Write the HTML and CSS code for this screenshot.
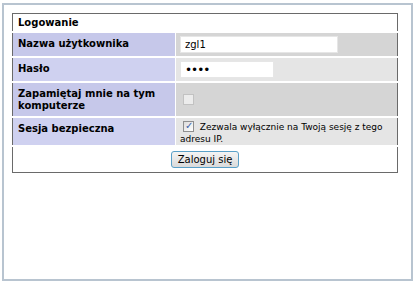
FILE: index.html
```html
<!DOCTYPE html>
<html lang="pl">
<head>
  <meta charset="UTF-8">
  <title>Logowanie</title>
  <link rel="stylesheet" href="styles.css">
</head>
<body>
  <div class="frame">
    <table class="login">
      <tr>
        <th colspan="2" class="title">Logowanie</th>
      </tr>
      <tr class="dark">
        <td class="label">Nazwa użytkownika</td>
        <td class="value"><input type="text" class="user" value="zgl1"></td>
      </tr>
      <tr class="light">
        <td class="label">Hasło</td>
        <td class="value"><input type="password" class="pass" value="abcd"></td>
      </tr>
      <tr class="dark">
        <td class="label">Zapamiętaj mnie na tym komputerze</td>
        <td class="value"><input type="checkbox" class="check" disabled></td>
      </tr>
      <tr class="light">
        <td class="label">Sesja bezpieczna</td>
        <td class="value note"><input type="checkbox" class="check" checked> Zezwala wyłącznie na Twoją sesję z tego adresu IP.</td>
      </tr>
      <tr>
        <td colspan="2" class="submit"><button type="button">Zaloguj się</button></td>
      </tr>
    </table>
  </div>
</body>
</html>
```

FILE: styles.css
```css
body {
  margin: 0;
  font-family: "DejaVu Sans", Verdana, sans-serif;
}
.frame {
  margin: 3px 0 0 2px;
  width: 389px;
  height: 258px;
  padding: 8px 10px 8px 8px;
  border: 2px solid #b8c4d0;
}
.login {
  width: 386px;
  border: 1px solid #6a6a6a;
  border-collapse: collapse;
  font-size: 10px;
  line-height: 12px;
}
.login td,
.login th {
  padding: 0;
  border-bottom: 2px solid #fff;
}
.title {
  text-align: left;
  font-weight: bold;
  height: 17px;
  padding: 0 5px !important;
}
.label {
  width: 152px;
  padding: 5px 5px 4px !important;
  font-weight: bold;
  vertical-align: top;
  border-right: 1px solid #fff;
}
.dark .label {
  background: #c6c8ea;
}
.light .label {
  background: #cfd1f0;
}
.dark .value {
  background: #d5d5d5;
}
.light .value {
  background: #e5e5e5;
}
.value {
  padding: 3px 4px !important;
}
.note {
  font-size: 9px;
  vertical-align: top;
  padding-top: 3px !important;
  padding-bottom: 0 !important;
  line-height: 12px;
}
.user,
.pass {
  padding: 0 4px;
  border: 1px solid #e6e6e6;
  font: 10px "DejaVu Sans", Verdana, sans-serif;
  box-sizing: border-box;
  height: 17px;
}
.user {
  width: 158px;
}
.pass {
  width: 94px;
  font-size: 12px;
  letter-spacing: -1px;
}
.check {
  appearance: none;
  width: 11px;
  height: 11px;
  margin: 0 3px 0 3px;
  vertical-align: -2px;
  border: 1px solid #8f8f8f;
  background: linear-gradient(135deg, #dcdcdc, #fff);
  position: relative;
}
.check:disabled {
  border-color: #c2c2c2;
  background: #ececec;
}
.check:checked::after {
  content: "\2713";
  position: absolute;
  left: 1px;
  top: -2px;
  font-size: 10px;
  color: #3b5fa8;
}
.submit {
  text-align: center;
  height: 25px;
  border-bottom: none !important;
}
.submit button {
  font: 10px "DejaVu Sans", Verdana, sans-serif;
  padding: 2px 6px;
  background: linear-gradient(#f4f4f4, #dadada);
  border: 1px solid #5aa0c8;
  border-radius: 3px;
}
```
